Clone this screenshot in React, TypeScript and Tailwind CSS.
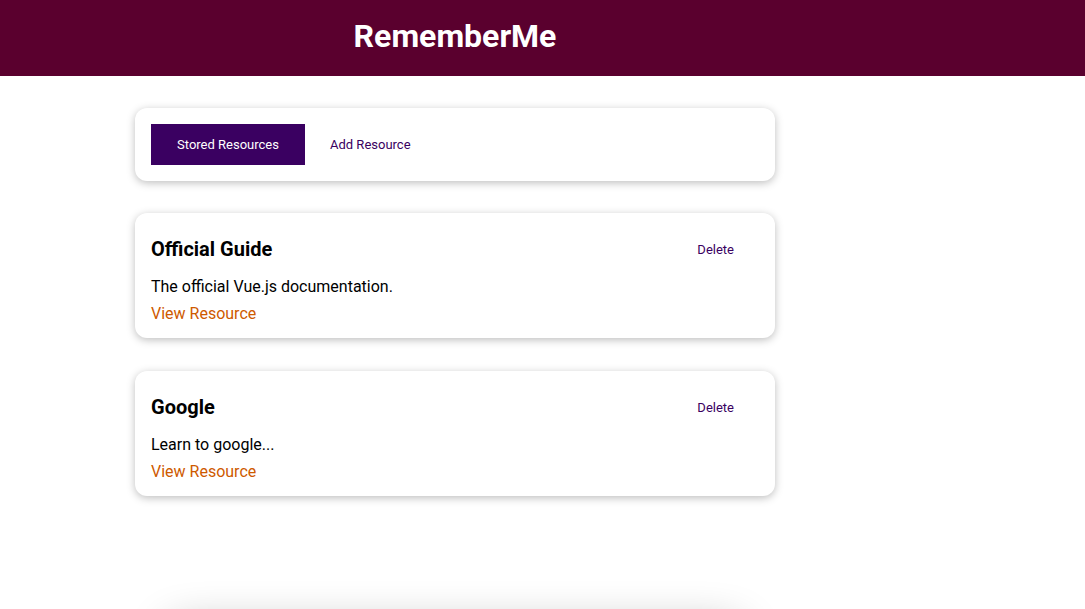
import { useState } from "react"

type Resource = {
  id: string
  title: string
  description: string
  link: string
}

const resources: Resource[] = [
  { id: "official-guide", title: "Official Guide", description: "The official Vue.js documentation.", link: "https://vuejs.org" },
  { id: "google", title: "Google", description: "Learn to google...", link: "https://google.com" },
]

function Card({ children, className = "" }: { children: React.ReactNode; className?: string }) {
  return (
    <div className={`rounded-[12px] bg-white shadow-[0_2px_8px_rgba(0,0,0,0.26)] ${className}`}>{children}</div>
  )
}

function ResourceItem({ item }: { item: Resource }) {
  return (
    <li>
      <Card className="px-4 pb-[14px] pt-4">
        <header className="flex h-[41px] items-center justify-between">
          <h3 className="mb-[2px] text-[20px] font-bold leading-[24px] text-black">{item.title}</h3>
          <button className="h-[41px] px-[25px] text-[13px] text-[#3a0061]">Delete</button>
        </header>
        <p className="mt-[7px] text-[16px] leading-[20px] text-black">{item.description}</p>
        <nav className="mt-[7px] leading-[20px]">
          <a href={item.link} className="text-[16px] leading-[20px] text-[#ce5a00]">
            View Resource
          </a>
        </nav>
      </Card>
    </li>
  )
}

export default function App() {
  const [tab, setTab] = useState("stored")

  return (
    <div className="relative min-h-[609px] overflow-hidden bg-white font-['Roboto',sans-serif]">
      <header className="flex h-[76px] w-full bg-[#5a002e]">
        <div className="flex w-[910px] items-center justify-center pb-[4px]">
          <h1 className="text-[32px] font-bold leading-none text-white">RememberMe</h1>
        </div>
      </header>

      <div className="w-[910px]">
        <div className="mx-auto mt-8 w-[640px]">
          <Card className="flex p-4">
            <button
              onClick={() => setTab("stored")}
              className={`h-[41px] w-[154px] text-[13px] ${
                tab === "stored" ? "bg-[#3a0061] text-white" : "text-[#3a0061]"
              }`}
            >
              Stored Resources
            </button>
            <button
              onClick={() => setTab("add")}
              className={`h-[41px] px-[25px] text-[13px] ${
                tab === "add" ? "bg-[#3a0061] text-white" : "text-[#3a0061]"
              }`}
            >
              Add Resource
            </button>
          </Card>

          <ul className="mt-8 flex flex-col gap-[33px]">
            {resources.map((r) => (
              <ResourceItem key={r.id} item={r} />
            ))}
          </ul>
        </div>
      </div>

      {/* dialog peeking in below the fold */}
      <div className="absolute left-[170px] top-[628px] h-[200px] w-[570px] rounded-[12px] bg-white shadow-[0_0_45px_rgba(0,0,0,0.32)]" />
    </div>
  )
}
